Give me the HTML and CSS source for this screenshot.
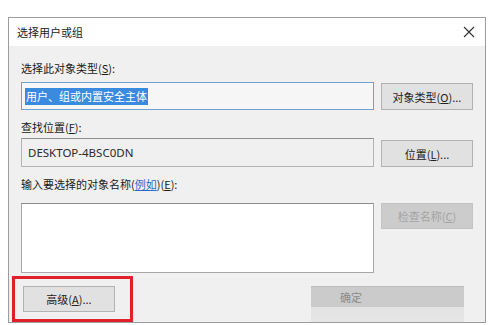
FILE: index.html
```html
<!DOCTYPE html>
<html lang="zh-CN">
<head>
<meta charset="utf-8">
<title>选择用户或组</title>
<link rel="stylesheet" href="styles.css">
</head>
<body>
<div class="dialog">
  <div class="titlebar">
    <span class="title">选择用户或组</span>
    <svg class="close" width="12" height="12" viewBox="0 0 12 12"><path d="M1 1L11 11M11 1L1 11" stroke="#333" stroke-width="1.1" fill="none"/></svg>
  </div>
  <div class="content">
    <div class="label l1">选择此对象类型(<u>S</u>):</div>
    <div class="row r1">
      <div class="field focus"><span class="sel">用户、组或内置安全主体</span></div>
      <div class="btn">对象类型(<u>O</u>)...</div>
    </div>
    <div class="label l2">查找位置(<u>F</u>):</div>
    <div class="row r2">
      <div class="field ro">DESKTOP-4BSC0DN</div>
      <div class="btn b2">位置(<u>L</u>)...</div>
    </div>
    <div class="label l3">输入要选择的对象名称(<span class="link">例如</span>)(<u>E</u>):</div>
    <div class="row r3">
      <div class="area"></div>
      <div class="btn disabled">检查名称(<u>C</u>)</div>
    </div>
    <div class="footer">
      <div class="btn adv">高级(<u>A</u>)...</div>
      <div class="okbtn">确定</div>
    </div>
  </div>
  <div class="mark"></div>
</div>
</body>
</html>
```
FILE: styles.css
```css
html, body {
  margin: 0;
  padding: 0;
  background: #ffffff;
}
body {
  font-family: "Noto Sans CJK SC", "Noto Sans", sans-serif;
  font-size: 11px;
  color: #1a1a1a;
  overflow: hidden;
}
u { text-decoration: underline; text-underline-offset: 1px; }
.dialog {
  position: relative;
  margin: 17px 0 0 8px;
  width: 476px;
  height: 304px;
  border: 1px solid #9c9c9c;
  background: #f0f0f0;
  overflow: hidden;
}
.titlebar {
  height: 28px;
  background: #ffffff;
  display: flex;
  align-items: center;
  justify-content: space-between;
  padding: 0 10px 0 8px;
}
.title { font-size: 11px; color: #222; }
.content {
  padding: 14px 12px 0 12px;
}
.label {
  height: 16px;
  line-height: 16px;
}
.l1 { margin-bottom: 6px; }
.l2 { margin-top: 9px; margin-bottom: 3px; }
.l3 { margin-top: 9px; margin-bottom: 11px; }
.row {
  display: flex;
  gap: 7px;
  align-items: flex-start;
}
.field {
  box-sizing: border-box;
  width: 353px;
  height: 28px;
  display: flex;
  align-items: center;
  padding-left: 3px;
}
.focus {
  border: 1px solid #6fa3d8;
  background: #f6f6f6;
}
.sel {
  background: #3a8be0;
  color: #ffffff;
  line-height: 17px;
  padding: 0 1px;
}
.ro {
  height: 29px;
  border: 1px solid #b4b4b4;
  border-top-color: #8e8e8e;
  background: #f0f0f0;
  padding-left: 6px;
  font-family: "Noto Sans", "Noto Sans CJK SC", sans-serif;
  font-size: 11.5px;
  color: #2a2a2a;
}
.btn {
  box-sizing: border-box;
  width: 92px;
  height: 27px;
  margin-top: 1px;
  border: 1px solid #b2b2b2;
  background: #e1e1e1;
  display: flex;
  align-items: center;
  justify-content: center;
  color: #222;
}
.b2 { margin-top: 2px; }
.link { color: #2a6dc9; text-decoration: underline; }
.area {
  box-sizing: border-box;
  width: 353px;
  height: 70px;
  border: 1px solid #a8a8a8;
  border-top-color: #8a8a8a;
  background: #ffffff;
}
.disabled {
  margin-top: 0;
  height: 26px;
  background: #cccccc;
  border-color: #c4c4c4;
  color: #a3a3a3;
}
.footer {
  display: flex;
  justify-content: space-between;
  align-items: flex-start;
  margin-top: 13px;
  padding-left: 2px;
}
.adv {
  margin-top: 0;
  height: 26px;
}
.okbtn {
  box-sizing: border-box;
  width: 153px;
  height: 37px;
  margin-right: 9px;
  background: linear-gradient(#cbcbcb 0, #cbcbcb 20px, #e3e3e3 20px, #e6e6e6 100%);
  border-top: 1px solid #bdbdbd;
  color: #8a8a8a;
  padding: 2px 0 0 29px;
  line-height: 16px;
}
.mark {
  position: absolute;
  left: 3px;
  top: 258px;
  width: 121px;
  height: 46px;
  box-sizing: border-box;
  border: 3px solid #e0202a;
}
```
